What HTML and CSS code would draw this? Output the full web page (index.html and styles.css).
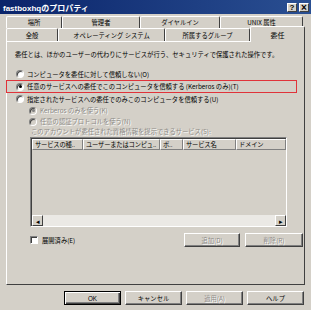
FILE: index.html
```html
<!DOCTYPE html>
<html lang="ja">
  <head>
    <meta charset="UTF-8" />
    <title>fastboxhqのプロパティ</title>
    <link rel="stylesheet" href="styles.css">
  </head>
  <body>
    <div class="window">
      <div class="titlebar">
        <span class="title">fastboxhqのプロパティ</span>
        <span class="tbtn">?</span>
        <span class="tbtn close">×</span>
      </div>

      <div class="tabs">
        <div class="tab-row">
          <div class="tab" style="width: 56px">場所</div>
          <div class="tab" style="width: 78px">管理者</div>
          <div class="tab" style="width: 80px">ダイヤルイン</div>
          <div class="tab" style="width: 83px">UNIX 属性</div>
        </div>
        <div class="tab-row front">
          <div class="tab" style="width: 52px">全般</div>
          <div class="tab" style="width: 107px">オペレーティング システム</div>
          <div class="tab" style="width: 85px">所属するグループ</div>
          <div class="tab active" style="width: 55px">委任</div>
        </div>
      </div>

      <div class="panel">
        <p class="desc">委任とは、ほかのユーザーの代わりにサービスが行う、セキュリティで保護された操作です。</p>

        <div class="opt"><span class="radio"></span>コンピュータを委任に対して信頼しない(O)</div>
        <div class="opt marked"><span class="radio checked"></span>任意のサービスへの委任でこのコンピュータを信頼する (Kerberos のみ)(T)</div>
        <div class="opt"><span class="radio"></span>指定されたサービスへの委任でのみこのコンピュータを信頼する(U)</div>
        <div class="opt sub off"><span class="radio checked"></span>Kerberos のみを使う(K)</div>
        <div class="opt sub off"><span class="radio"></span>任意の認証プロトコルを使う(N)</div>

        <div class="caption off">このアカウントが委任された資格情報を提示できるサービス(S):</div>

        <div class="listview">
          <div class="lv-head">
            <span style="width: 51px">サービスの種..</span>
            <span style="width: 77px">ユーザーまたはコンピュ..</span>
            <span style="width: 23px">ポ..</span>
            <span style="width: 53px">サービス名</span>
            <span class="last">ドメイン</span>
          </div>
          <div class="lv-body"></div>
          <div class="hscroll">
            <span class="arrow">◂</span>
            <span class="track"></span>
            <span class="arrow">▸</span>
          </div>
        </div>

        <div class="list-actions">
          <div class="checkrow"><span class="check"></span>展開済み(E)</div>
          <button class="btn" disabled>追加(D)</button>
          <button class="btn" disabled>削除(R)</button>
        </div>
      </div>

      <div class="footer">
        <button class="btn default">OK</button>
        <button class="btn">キャンセル</button>
        <button class="btn" disabled>適用(A)</button>
        <button class="btn">ヘルプ</button>
      </div>
    </div>
  </body>
</html>
```

FILE: styles.css
```css
body {
  margin: 0;
  background: #d4d0c8;
  font-family: "Noto Sans CJK JP", "Noto Sans", sans-serif;
  font-size: 6.3px;
  color: #000;
}
.window {
  width: 311px;
  height: 310px;
  background: #d4d0c8;
  overflow: hidden;
}
.titlebar {
  height: 14px;
  display: flex;
  align-items: center;
  padding: 0 2px 0 3px;
  background: linear-gradient(to right, #0a246a, #2a4f92);
  color: #fff;
}
.title {
  flex: 1;
  font-family: "Liberation Sans", "Noto Sans CJK JP", sans-serif;
  font-weight: bold;
  font-size: 8px;
}
.tbtn {
  width: 10px;
  height: 9px;
  margin-left: 2px;
  display: flex;
  align-items: center;
  justify-content: center;
  background: #d4d0c8;
  color: #000;
  font-family: "Liberation Sans", sans-serif;
  font-weight: bold;
  font-size: 8px;
  border: 1px solid;
  border-color: #fff #404040 #404040 #fff;
  box-sizing: border-box;
}
.tbtn.close {
  font-size: 10px;
}
.tabs {
  margin-top: 2px;
  padding-left: 6px;
}
.tab-row {
  display: flex;
  height: 12px;
}
.tab-row.front {
  height: 13px;
}
.tab {
  box-sizing: border-box;
  display: flex;
  align-items: center;
  justify-content: center;
  border-top: 1px solid #fff;
  border-left: 1px solid #fff;
  border-right: 1px solid #404040;
  border-radius: 2px 2px 0 0;
}
.tab.active {
  position: relative;
  margin-top: -2px;
  height: 16px;
  z-index: 1;
  background: #d4d0c8;
  font-size: 7px;
}
.panel {
  box-sizing: border-box;
  width: 299px;
  height: 244px;
  margin-left: 6px;
  border: 1px solid;
  border-color: #fff #404040 #404040 #fff;
}
.desc {
  margin: 8px 0 8px 8px;
  line-height: 10px;
}
.opt {
  box-sizing: border-box;
  display: flex;
  align-items: center;
  width: 291px;
  height: 12px;
  margin-left: -1px;
  padding-left: 9px;
  border: 1px solid transparent;
}
.opt.marked {
  height: 13px;
  border-color: #e0333a;
}
.opt.sub {
  height: 11px;
  padding-left: 22px;
}
.radio {
  box-sizing: border-box;
  width: 8px;
  height: 8px;
  margin-right: 3px;
  border-radius: 50%;
  border: 1px solid;
  border-color: #808080 #fff #fff #808080;
  background: #fff;
  box-shadow: inset 1px 1px 0 #404040;
  display: flex;
  align-items: center;
  justify-content: center;
}
.radio.checked::after {
  content: "";
  width: 3px;
  height: 3px;
  border-radius: 50%;
  background: #000;
}
.off {
  color: #8d8b87;
  text-shadow: 1px 1px 0 #fff;
}
.off .radio {
  background: #d4d0c8;
}
.off .radio.checked::after {
  background: #808080;
}
.caption {
  margin: 0 0 1px 24px;
  height: 9px;
  line-height: 9px;
}
.listview {
  box-sizing: border-box;
  width: 257px;
  height: 90px;
  margin-left: 23px;
  display: flex;
  flex-direction: column;
  border: 1px solid;
  border-color: #808080 #fff #fff #808080;
  box-shadow: inset 1px 1px 0 #404040;
  background: #d4d0c8;
}
.lv-head {
  display: flex;
  height: 11px;
  margin: 1px 0 0 1px;
}
.lv-head span {
  box-sizing: border-box;
  display: flex;
  align-items: center;
  padding-left: 2px;
  border: 1px solid;
  border-color: #fff #808080 #808080 #fff;
  white-space: nowrap;
  letter-spacing: -0.2px;
}
.lv-head .last {
  flex: 1;
}
.lv-body {
  flex: 1;
}
.hscroll {
  display: flex;
  height: 11px;
  margin-left: 1px;
}
.arrow {
  box-sizing: border-box;
  width: 11px;
  display: flex;
  align-items: center;
  justify-content: center;
  font-size: 7px;
  border: 1px solid;
  border-color: #fff #404040 #404040 #fff;
  background: #d4d0c8;
}
.track {
  flex: 1;
  background: #ebe9e5;
}
.list-actions {
  display: flex;
  align-items: center;
  margin: 6px 0 0 23px;
}
.checkrow {
  flex: 1;
  display: flex;
  align-items: center;
}
.check {
  box-sizing: border-box;
  width: 8px;
  height: 8px;
  margin-right: 4px;
  background: #fff;
  border: 1px solid;
  border-color: #808080 #fff #fff #808080;
  box-shadow: inset 1px 1px 0 #404040;
}
.btn {
  box-sizing: border-box;
  width: 57px;
  height: 14px;
  padding: 0;
  margin-left: 5px;
  font-family: inherit;
  font-size: 6.3px;
  color: #000;
  background: #d4d0c8;
  border: 1px solid;
  border-color: #fff #404040 #404040 #fff;
  box-shadow: inset -1px -1px 0 #808080;
}
.list-actions .btn {
  width: 56px;
  margin-left: 5px;
}
.list-actions .btn:last-child {
  width: 58px;
  margin-right: 1px;
}
.btn:disabled {
  color: #8d8b87;
  text-shadow: 1px 1px 0 #fff;
}
.btn.default {
  border: 1px solid #000;
  box-shadow: inset 1px 1px 0 #fff, inset -1px -1px 0 #404040,
    inset -2px -2px 0 #808080;
  font-family: "Liberation Sans", sans-serif;
}
.footer {
  display: flex;
  justify-content: flex-end;
  padding: 6px 7px 0 0;
}
.footer .btn {
  margin-left: 4px;
}
```
